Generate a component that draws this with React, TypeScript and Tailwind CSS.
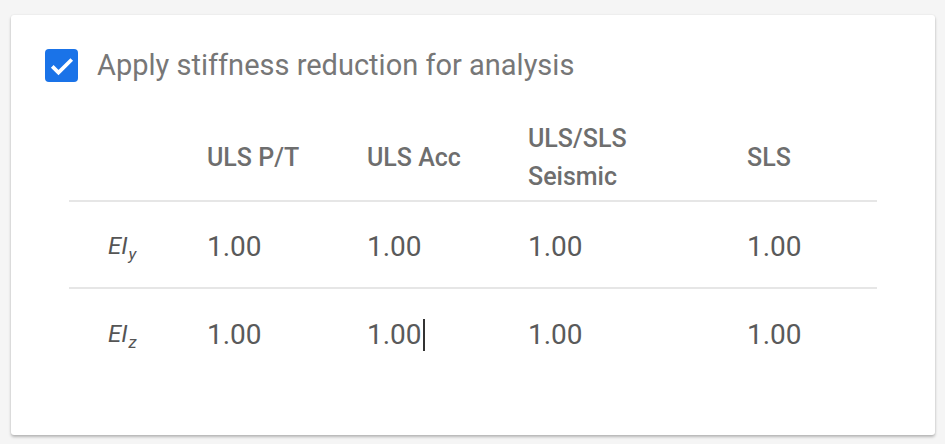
import React from "react";

const cols = "grid grid-cols-[138px_160px_161px_219px_130px]";

function EI({ sub }: { sub: string }) {
  return (
    <span className="italic text-[24px] text-[#555] pl-[39px] relative top-[-2px]">
      EI<span className="text-[17px] relative top-[6px] ml-[1px]">{sub}</span>
    </span>
  );
}

export default function App() {
  const vals = ["1.00", "1.00", "1.00", "1.00"];
  return (
    <div
      className="w-[945px] h-[444px] bg-[#f5f5f5] pt-[15px] pl-[11px]"
      style={{ fontFamily: "Roboto, 'Noto Sans', sans-serif" }}
    >
      <div className="w-[924px] h-[420px] bg-white rounded-[3px] shadow-[0_2px_3px_rgba(0,0,0,0.25),0_0_2px_rgba(0,0,0,0.08)] pt-[34px] pl-[34px]">
        <div className="flex items-center gap-[19px]">
          <div className="w-[33px] h-[33px] rounded-[4px] bg-[#1a73e8] flex items-center justify-center">
            <svg width="30" height="30" viewBox="0 0 24 24">
              <path d="M4.2 12.3l5 5L19.8 6.8" fill="none" stroke="white" strokeWidth="3" />
            </svg>
          </div>
          <span className="text-[29px] text-[#777] leading-none">Apply stiffness reduction for analysis</span>
        </div>
        <div className="ml-[24px] mt-[29px] w-[808px]">
          <div className={`${cols} h-[91px] pt-[5px] items-center border-b-2 border-[#e6e6e6] text-[25px] font-medium text-[#6e6e6e]`}>
            <div />
            <div>ULS P/T</div>
            <div>ULS Acc</div>
            <div className="leading-[38px]">ULS/SLS<br />Seismic</div>
            <div>SLS</div>
          </div>
          {["y", "z"].map((s, r) => (
            <div
              key={s}
              className={`${cols} h-[87px] pt-[4px] items-center text-[28px] text-[#5a5a5a] ${r === 0 ? "border-b-2 border-[#e6e6e6]" : ""}`}
            >
              <div><EI sub={s} /></div>
              {vals.map((v, i) => (
                <div key={i} className="flex items-center">
                  <span>{v}</span>
                  {r === 1 && i === 1 ? <span className="w-[2px] h-[32px] bg-[#333] ml-[1px]" /> : null}
                </div>
              ))}
            </div>
          ))}
        </div>
      </div>
    </div>
  );
}
